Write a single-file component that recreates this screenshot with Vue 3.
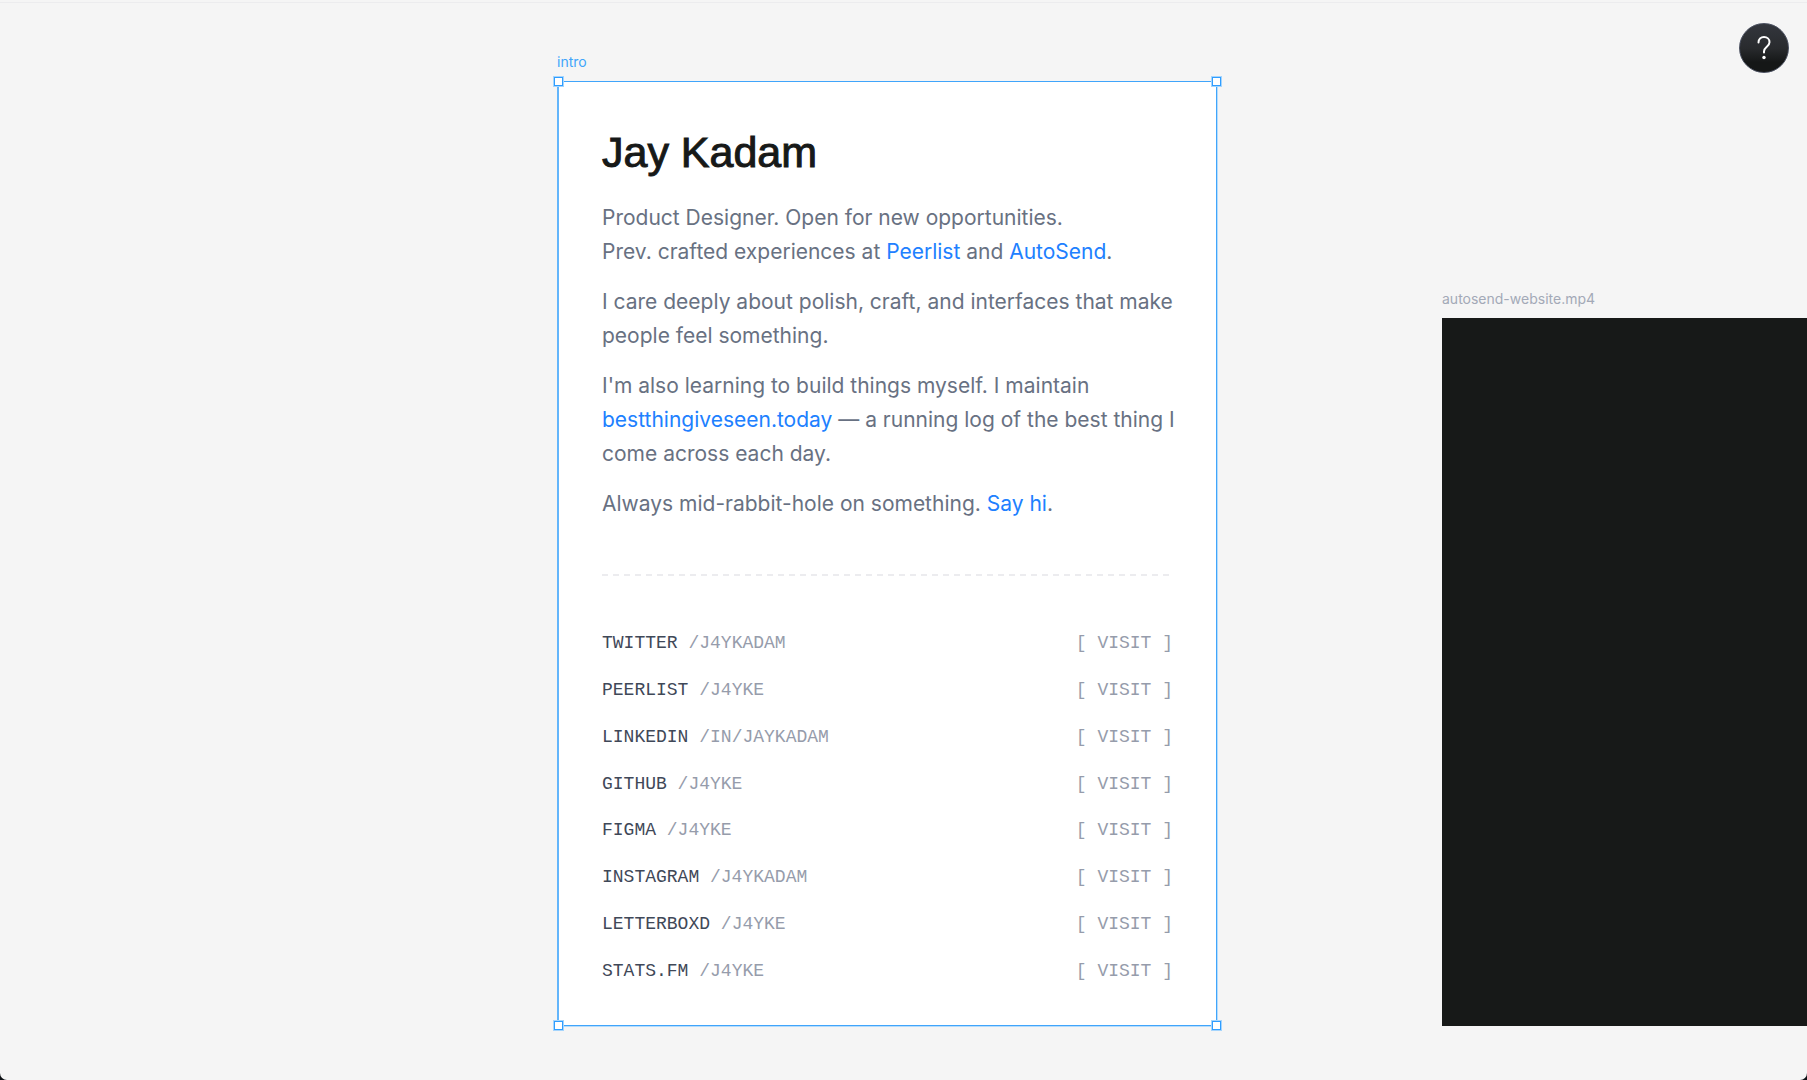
<script setup>
const profiles = [
  { name: 'TWITTER', handle: '/J4YKADAM', url: 'https://twitter.com/j4ykadam' },
  { name: 'PEERLIST', handle: '/J4YKE', url: 'https://peerlist.io/j4yke' },
  { name: 'LINKEDIN', handle: '/IN/JAYKADAM', url: 'https://linkedin.com/in/jaykadam' },
  { name: 'GITHUB', handle: '/J4YKE', url: 'https://github.com/j4yke' },
  { name: 'FIGMA', handle: '/J4YKE', url: 'https://figma.com/@j4yke' },
  { name: 'INSTAGRAM', handle: '/J4YKADAM', url: 'https://instagram.com/j4ykadam' },
  { name: 'LETTERBOXD', handle: '/J4YKE', url: 'https://letterboxd.com/j4yke' },
  { name: 'STATS.FM', handle: '/J4YKE', url: 'https://stats.fm/j4yke' },
]
const corners = ['tl', 'tr', 'bl', 'br']
</script>

<template>
  <main class="canvas">
    <section class="frame intro">
      <div class="frame-label selected">intro</div>
      <article class="card">
        <h1>Jay Kadam</h1>
        <div class="bio">
          <p>
            Product Designer. Open for new opportunities.<br />
            Prev. crafted experiences at <a href="https://peerlist.io">Peerlist</a> and
            <a href="https://autosend.com">AutoSend</a>.
          </p>
          <p>
            I care deeply about polish, craft, and interfaces that make<br />
            people feel something.
          </p>
          <p>
            I'm also learning to build things myself. I maintain<br />
            <a href="https://bestthingiveseen.today">bestthingiveseen.today</a> — a running log of the best thing I<br />
            come across each day.
          </p>
          <p>Always mid-rabbit-hole on something. <a href="#hi">Say hi</a>.</p>
        </div>
        <hr />
        <ul class="profiles">
          <li v-for="p in profiles" :key="p.name">
            <span><span class="name">{{ p.name }}</span> {{ p.handle }}</span>
            <a :href="p.url">[ VISIT ]</a>
          </li>
        </ul>
        <i v-for="c in corners" :key="c" class="handle" :class="c"></i>
      </article>
    </section>

    <section class="frame video">
      <div class="frame-label">autosend-website.mp4</div>
      <div class="screen"></div>
    </section>

    <button class="help" type="button" aria-label="Help">
      <svg width="16" height="26" viewBox="0 0 16 26" fill="none" stroke="#fff" stroke-width="2" stroke-linecap="round" stroke-linejoin="round">
        <path d="M2.500 7.500C2.500 4 4.900 2 8 2s5.500 2 5.500 5.200c0 2.500-1.500 3.700-3.200 5.100C8.700 13.600 8 14.500 8 16.500v1" />
        <circle cx="8" cy="22.500" r="1.700" fill="#fff" stroke="none" />
      </svg>
    </button>
  </main>
</template>

<style>
body {
  margin: 0;
  background: #0c1014;
}
</style>

<style scoped>
.canvas {
  position: relative;
  box-sizing: border-box;
  height: 100vh;
  overflow: hidden;
  background: linear-gradient(#f5f5f5 2px, #ececee 2px, #ececee 3px, #f5f5f5 3px);
  border-radius: 0 0 7px 7px;
  font-family: Inter, "Liberation Sans", sans-serif;
}

/* frames placed on the free canvas */
.frame {
  position: absolute;
}
.intro {
  left: 557px;
  top: 52px;
  width: 660px;
}
.video {
  left: 1442px;
  top: 289px;
  width: 1200px;
}
.frame-label {
  height: 20px;
  margin-bottom: 9px;
  font-size: 14px;
  line-height: 20px;
  color: #a3a9b7;
}
.frame-label.selected {
  color: #40a5fb;
}

.card {
  position: relative;
  box-sizing: border-box;
  padding: 44px 43px 31px;
  border: 1px solid #40a5fb;
  border-left: 2px solid #63b5fb;
  background: #fff;
  box-shadow: 1px 1px 0 #b5dcfc;
}
h1 {
  margin: 0;
  font-family: "Liberation Sans", Arial, sans-serif;
  font-size: 43px;
  font-weight: 400;
  line-height: 52px;
  color: #171918;
  -webkit-text-stroke: 1px #171918;
}
.bio {
  display: flex;
  flex-direction: column;
  gap: 16px;
  margin-top: 23px;
  font-size: 21px;
  line-height: 34px;
  color: #687182;
}
.bio p {
  margin: 0;
  white-space: nowrap;
}
.bio a {
  color: #2080ff;
  text-decoration: none;
}
hr {
  height: 2px;
  margin: 53px 0 44px;
  border: 0;
  background: repeating-linear-gradient(90deg, #ececef 0 6px, transparent 6px 11px);
}
.profiles {
  display: grid;
  grid-auto-rows: 1fr;
  height: 374px;
  margin: 0;
  padding: 0;
  list-style: none;
  font-family: "Liberation Mono", monospace;
  font-size: 18px;
  color: #969cab;
}
.profiles li {
  display: flex;
  align-items: center;
  justify-content: space-between;
}
.profiles .name {
  color: #3f4858;
}
.profiles a {
  color: inherit;
  text-decoration: none;
}

.handle {
  position: absolute;
  box-sizing: border-box;
  width: 9px;
  height: 9px;
  border: 1px solid #2f9dff;
  background: #fff;
  box-shadow: 0 0 0 1px #a5d5fd;
}
.tl { left: -5px; top: -5px; }
.tr { right: -5px; top: -5px; }
.bl { left: -5px; bottom: -5px; }
.br { right: -5px; bottom: -5px; }

.screen {
  height: 708px;
  background: #171918;
}

.help {
  position: absolute;
  top: 23px;
  right: 18px;
  display: flex;
  align-items: center;
  justify-content: center;
  width: 50px;
  height: 50px;
  padding: 0;
  border: 1px solid #4a5060;
  border-radius: 50%;
  background: linear-gradient(#33363d, #292b2e 50%, #151717 80%);
}
</style>
